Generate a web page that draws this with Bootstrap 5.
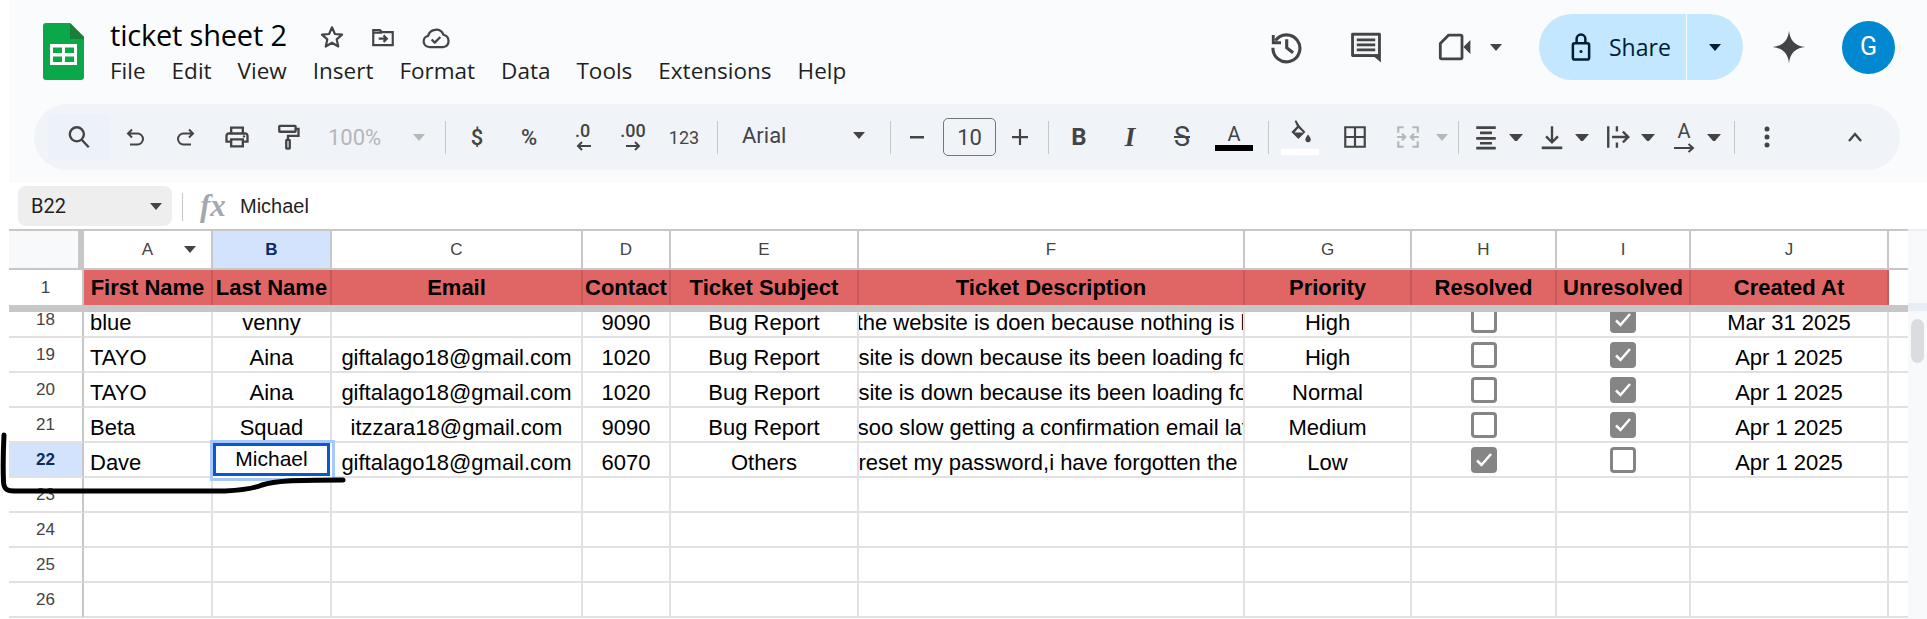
<!DOCTYPE html>
<html lang="en">
<head>
<meta charset="utf-8">
<title>ticket sheet 2</title>
<link href="https://cdn.jsdelivr.net/npm/bootstrap@5.3.0/dist/css/bootstrap.min.css" rel="stylesheet">
<style>
html,body{height:619px;overflow:hidden;background:#fff;}
body{position:relative;padding-left:9px;font-family:"Liberation Sans",Arial,sans-serif;color:#000;}
svg{display:block;flex:none;}
.app-head{height:183px;background:#f9fbfd;}
.head-top{height:104px;}
.logo-box{width:41px;margin-left:34px;margin-top:23px;}
.doc-titles{margin-left:26px;}
.doc-title{font-family:"Open Sans",sans-serif;font-size:29px;line-height:36px;margin-top:17px;color:#000;letter-spacing:-.2px;}
.doc-icons{gap:24px;margin-left:32px;margin-top:5px;}
.menu-row{gap:26px;margin-top:3px;font-family:"Open Sans",sans-serif;font-size:22.500px;line-height:30px;color:#1f1f1f;}
.right-tools{margin-left:auto;margin-right:32px;height:94px;}
.share-pill{width:204px;height:66px;border-radius:33px;background:#c2e7ff;color:#001d35;font-family:"Open Sans",sans-serif;font-size:23px;}
.share-main{width:148px;height:66px;border-right:1px solid #f9fbfd;padding-left:32px;gap:18px;}
.share-drop{width:55px;}
.avatar-g{width:53px;height:53px;border-radius:50%;background:#0288d1;color:#fff;font-family:"Roboto",sans-serif;font-size:25px;}
.tri{width:0;height:0;border-left:6px solid transparent;border-right:6px solid transparent;border-top:7px solid #444;flex:none;}
.tri-dark{border-top-color:#001d35;}
.tri-off{border-top-color:#b5b7b9;}
.r-hist{margin-right:46px;}.r-comm{margin-right:55px;}.r-vid{margin-right:18px;}.r-tri{margin-right:37px;}.r-share{margin-right:29px;}.r-gem{margin-right:36px;}
.toolbar{height:66px;margin-left:25px;margin-right:27px;border-radius:33px;background:#f0f4f9;padding-left:14px;color:#444;font-family:"Roboto",sans-serif;}
.tb-i{height:46px;flex:none;display:flex;align-items:center;justify-content:center;}
.tb-search{background:#edf2fa;border-radius:4px;}
.tw-4{width:4px}.tw-6{width:6px}.tw-7{width:7px}.tw-10{width:10px}.tw-11{width:11px}.tw-12{width:12px}.tw-13{width:13px}.tw-14{width:14px}
.tw-30{width:30px}.tw-42{width:42px}.tw-46{width:46px}.tw-48{width:48px}.tw-50{width:50px}.tw-52{width:52px}.tw-53{width:53px}.tw-54{width:54px}.tw-58{width:58px}.tw-60{width:60px}.tw-62{width:62px}.tw-64{width:64px}.tw-66{width:66px}.tw-88{width:88px}.tw-90{width:90px}.tw-161{width:161px}
.tb-sep{width:1px;height:33px;background:#c7c7c7;flex:none;}
.tb-pct{color:#b4b6b8;font-size:22px;justify-content:flex-start;padding-left:14px;}
.tb-txt{font-size:22px;}
.tb-sm{font-size:18px;}
.tb-dec{flex-direction:column;font-size:18px;line-height:18px;font-weight:500;}
.tb-font{font-size:22px;justify-content:space-between;padding:0 14px 4px 24px;}
.tb-size{height:38px;border:1px solid #747775;border-radius:5px;font-size:22px;}
.tb-b{font-weight:700;font-size:24px;}
.tb-it{font-family:"Liberation Serif",serif;font-style:italic;font-weight:700;font-size:27px;}
.tb-st{font-size:27px;}
.tb-colr{flex-direction:column;font-size:20px;line-height:22px;}
.bar-ink{width:38px;height:6px;background:#000;}
.bar-paper{width:38px;height:6px;background:#fff;margin-top:1px;}
.pair-i{width:46px;display:flex;justify-content:center;}
.formula{height:46px;padding-left:9px;}
.name-box{width:154px;height:40px;margin-top:3px;border-radius:8px;background:#eee;padding:0 10px 0 13px;font-family:"Roboto",sans-serif;font-size:20px;color:#1f1f1f;}
.fx-sep{width:1px;height:28px;background:#c7c7c7;margin-left:10px;margin-top:10px;}
.fx-mark{font-family:"Liberation Serif",serif;font-style:italic;font-weight:700;font-size:31px;color:#a4a8ac;margin-left:17px;width:40px;line-height:46px;}
.fx-val{font-size:20px;line-height:46px;color:#1f1f1f;}
.sheet-main{width:1899px;flex:none;}
.vscroll{width:19px;flex:none;background:#f8f9fa;height:390px;}
.vs-top{height:74px;border-top:2px solid #eceef1;}
.vs-mark{height:8px;background:#e8edf5;}
.vs-thumb{width:13px;height:44px;margin:8px 0 0 3px;border-radius:7px;background:#dadce0;}
.gridt{table-layout:fixed;width:1899px;border-collapse:separate;border-spacing:0;}
.c-rh{width:75px}.c-a{width:129px}.c-b{width:119px}.c-c{width:251px}.c-d{width:88px}.c-e{width:188px}.c-f{width:386px}.c-g{width:167px}.c-h{width:145px}.c-i{width:134px}.c-j{width:198px}.c-x{width:19px}
.gridt th,.gridt td{padding:0;overflow:hidden;white-space:nowrap;}
.colhd th{height:41px;border-top:2px solid #c7c7c7;border-right:2px solid #c7c7c7;border-bottom:2px solid #c7c7c7;font:400 17px "Liberation Sans",Arial,sans-serif;color:#444;text-align:center;vertical-align:middle;}
.colhd .corner{background:#f8f9fa;border-right:6px solid #c7c7c7;border-bottom:2px solid #c7c7c7;}
.colhd .colsel{background:#d3e3fd;color:#0b2a66;font-weight:700;}
.colhd .col-a-in{display:flex;align-items:center;justify-content:center;position:relative;}
.colhd .tri{position:absolute;right:15px;top:6px;}
.colhd .col-x{border-right:0;}
.frz th{height:35px;}
.frz .rn{background:#fff;border-right:2px solid #c7c7c7;font:400 17px "Liberation Sans",Arial,sans-serif;color:#444;text-align:center;}
.frz .redh{background:#e06666;border-right:2px solid #c95a5a;font:700 22px/34px "Liberation Sans",Arial,sans-serif;color:#000;text-align:center;}
.frz .nof{background:#fff;}
.frz-bar{height:7px;background:#c7c7c7;}
.bodyclip{height:307px;overflow:hidden;}
.gridb{margin-top:-9px;}
.gridb td{height:35px;border-right:2px solid #e1e1e1;border-bottom:2px solid #e1e1e1;font-size:22px;line-height:26px;text-align:center;vertical-align:bottom;color:#000;}
.gridb .rn{border-right:2px solid #c7c7c7;border-bottom-color:#e1e1e1;font-size:17px;line-height:26px;color:#444;vertical-align:middle;}
.gridb .rn-sel{background:#d3e3fd;color:#0b2a66;font-weight:700;}
.gridb .lft{text-align:left;padding-left:6px;}
.gridb .xc{border-right:0;}
.clipc{display:flex;justify-content:center;overflow:hidden;}
.clipc span{flex:none;}
.cell-sel{position:relative;box-shadow:inset 0 0 0 3px #0b57d0,0 0 0 3px #a8c7fa;}
.gridb .cell-sel{font-size:21px;vertical-align:top;line-height:31px;overflow:visible;border-color:transparent;}
.ck{width:26px;height:26px;margin:0 auto 3px;border:3px solid #858585;border-radius:4px;}
.ck-on{background:#858585;}
.ink{position:absolute;left:0;top:430px;pointer-events:none;}
</style>
</head>
<body>
<header class="app-head">
  <div class="head-top d-flex">
    <div class="logo-box">
      <svg width="41" height="57" viewBox="0 0 41 57"><path d="M3 0H27L41 14V54a3 3 0 0 1-3 3H3a3 3 0 0 1-3-3V3a3 3 0 0 1 3-3z" fill="#0ba84a"/><path d="M27 0L41 14V16H27z" fill="#188038"/><path d="M7 21H34V42H7z" fill="#fff"/><path d="M10 24.500H19V30H10zM22 24.500H31V30H22zM10 33.500H19V39H10zM22 33.500H31V39H22z" fill="#0ba84a"/></svg>
    </div>
    <div class="doc-titles">
      <div class="d-flex align-items-start">
        <div class="doc-title">ticket sheet 2</div>
        <div class="doc-icons d-flex align-items-center mt-4">
          <svg width="26" height="26" viewBox="0 0 24 24" fill="none" stroke="#444" stroke-width="2" stroke-linejoin="round"><path d="M12 3l2.700 6.200 6.600.600-5 4.400 1.500 6.600L12 17.300 6.200 20.800l1.500-6.600-5-4.400 6.600-.6z"/></svg>
          <svg width="28" height="26" viewBox="0 0 24 24" fill="none" stroke="#444" stroke-width="2"><path d="M3 5.500h6l2 2h10v12H3zM3 8h8"/><path d="M8 13.500h7M12.500 10.500l3 3-3 3"/></svg>
          <svg width="30" height="26" viewBox="0 0 24 20" fill="none" stroke="#444" stroke-width="1.800" stroke-linejoin="round"><path d="M6.500 18a4.500 4.500 0 0 1-.8-8.900A6.500 6.500 0 0 1 18 8.200 5 5 0 0 1 18 18z"/><path d="M8.500 12l2.500 2.500 4.500-4.500"/></svg>
        </div>
      </div>
      <nav class="menu-row d-flex">
        <span>File</span><span>Edit</span><span>View</span><span>Insert</span><span>Format</span><span>Data</span><span>Tools</span><span>Extensions</span><span>Help</span>
      </nav>
    </div>
    <div class="right-tools d-flex align-items-center">
      <svg class="r-hist" width="34" height="34" viewBox="0 0 24 24" fill="none" stroke="#444" stroke-width="2.200"><path d="M4.500 7.500A9.500 9.500 0 1 1 2.800 12.500"/><path d="M3 3.500v5.500h5.500" stroke-width="2"/><path d="M12.500 6.500V12.500l4.500 3.500"/></svg>
      <svg class="r-comm" width="34" height="34" viewBox="0 0 24 24"><path d="M21.500 2H2.500a1 1 0 0 0-1 1v15a1 1 0 0 0 1 1H18l4.500 4V3a1 1 0 0 0-1-1z" fill="#444"/><path d="M3.500 4h17v13H3.500z" fill="#f3f4f6"/><path d="M5.500 6h13v2h-13zM5.500 9.500h13v2h-13zM5.500 13h13v2h-13z" fill="#444"/></svg>
      <svg class="r-vid" width="34" height="28" viewBox="0 0 24 20" fill="none"><path d="M7.500 1.500H16a1 1 0 0 1 1 1v15a1 1 0 0 1-1 1H2.500a1 1 0 0 1-1-1V7.500z" stroke="#444" stroke-width="2" stroke-linejoin="round"/><path d="M18 10L23 5v10z" fill="#444"/></svg>
      <div class="tri r-tri"></div>
      <div class="share-pill d-flex align-items-center r-share">
        <div class="share-main d-flex align-items-center">
          <svg width="20" height="30" viewBox="0 0 16 24" fill="none" stroke="#001d35" stroke-width="2"><rect x="1.500" y="9" width="13" height="13" rx="1.500"/><path d="M4.500 9V5.500a3.500 3.500 0 0 1 7 0V9"/><circle cx="8" cy="15.500" r="1.200" fill="#001d35" stroke="none"/></svg>
          <span>Share</span>
        </div>
        <div class="share-drop d-flex justify-content-center"><div class="tri tri-dark"></div></div>
      </div>
      <svg class="r-gem" width="34" height="34" viewBox="0 0 24 24"><path d="M12 .5C12.700 7.500 16.500 11.300 23.500 12 16.500 12.700 12.700 16.500 12 23.500 11.300 16.500 7.500 12.700.5 12 7.500 11.300 11.300 7.500 12 .5z" fill="#444"/></svg>
      <div class="avatar-g d-flex align-items-center justify-content-center">G</div>
    </div>
  </div>
  <div class="toolbar d-flex align-items-center">
    <div class="tb-i tw-62 tb-search"><svg width="26" height="26" viewBox="0 0 24 24" fill="none" stroke="#444" stroke-width="2.200"><circle cx="10" cy="9.500" r="6.500"/><path d="M14.500 14.500L21 21.500"/></svg></div>
    <div class="tb-i tw-50"><svg width="24" height="24" viewBox="0 0 24 24" fill="none" stroke="#444" stroke-width="2"><path d="M9 4.500L5 8.500l4 4M5 8.500h9.500a5.500 5.500 0 0 1 0 11H7"/></svg></div>
    <div class="tb-i tw-52"><svg width="24" height="24" viewBox="0 0 24 24" fill="none" stroke="#444" stroke-width="2"><path d="M15 4.500l4 4-4 4M19 8.500H9.500a5.500 5.500 0 0 0 0 11H17"/></svg></div>
    <div class="tb-i tw-50"><svg width="28" height="28" viewBox="0 0 24 24" fill="#444"><path d="M19 8h-1V3H6v5H5c-1.660 0-3 1.340-3 3v6h4v4h12v-4h4v-6c0-1.660-1.340-3-3-3zM8 5h8v3H8V5zm8 12v2H8v-4h8v2zm2-2v-2H6v2H4v-4c0-.55.45-1 1-1h14c.55 0 1 .45 1 1v4h-2z"/><circle cx="18" cy="11.500" r="1"/></svg></div>
    <div class="tb-i tw-52"><svg width="28" height="28" viewBox="0 0 24 24" fill="none" stroke="#444" stroke-width="2"><rect x="4.500" y="2.500" width="14" height="5" rx=".5"/><path d="M18.500 5h2.500v6h-9v3"/><rect x="10.500" y="14.500" width="3" height="7.500" rx=".5"/></svg></div>
    <div class="tb-i tw-90 tb-pct">100%</div>
    <div class="tb-i tw-30"><div class="tri tri-off"></div></div>
    <div class="tb-i tw-11"></div><div class="tb-sep"></div><div class="tb-i tw-6"></div>
    <div class="tb-i tw-50 tb-txt fw-medium">$</div>
    <div class="tb-i tw-54 tb-txt fw-medium">%</div>
    <div class="tb-i tw-53 tb-dec"><span>.0</span><svg width="22" height="12" viewBox="0 0 22 12" fill="none" stroke="#444" stroke-width="2"><path d="M19 6H6M10 2L6 6l4 4"/></svg></div>
    <div class="tb-i tw-48 tb-dec"><span>.00</span><svg width="22" height="12" viewBox="0 0 22 12" fill="none" stroke="#444" stroke-width="2"><path d="M4 6h13M13 2l4 4-4 4"/></svg></div>
    <div class="tb-i tw-54 tb-sm">123</div>
    <div class="tb-i tw-6"></div><div class="tb-sep"></div>
    <div class="tb-i tw-161 tb-font"><span>Arial</span><div class="tri"></div></div>
    <div class="tb-i tw-11"></div><div class="tb-sep"></div>
    <div class="tb-i tw-52"><svg width="20" height="20" viewBox="0 0 20 20"><path d="M3 9h14v2.500H3z" fill="#444"/></svg></div>
    <div class="tb-i tw-53 tb-size">10</div>
    <div class="tb-i tw-48"><svg width="22" height="22" viewBox="0 0 22 22"><path d="M3 10h16v2.200H3zM9.900 3h2.200v16H9.900z" fill="#444"/></svg></div>
    <div class="tb-i tw-4"></div><div class="tb-sep"></div>
    <div class="tb-i tw-60 tb-b">B</div>
    <div class="tb-i tw-42 tb-it">I</div>
    <div class="tb-i tw-62 tb-st"><s>S</s></div>
    <div class="tb-i tw-42 tb-colr"><span>A</span><div class="bar-ink"></div></div>
    <div class="tb-i tw-13"></div><div class="tb-sep"></div>
    <div class="tb-i tw-62 tb-colr"><svg width="26" height="28" viewBox="0 0 24 26" fill="#444"><path d="M7 1l1.500-.8 3 5 5.500 6-6.500 6.500L4 11.200l5.200-5.500z"/><path d="M10.500 7.500L7 11.500h8z" fill="#f0f4f9"/><path d="M19.500 13.500c1.500 2 2.500 3.200 2.500 4.700a2.500 2.500 0 0 1-5 0c0-1.500 1-2.700 2.500-4.700z"/></svg><div class="bar-paper"></div></div>
    <div class="tb-i tw-48"><svg width="26" height="26" viewBox="0 0 24 24" fill="none" stroke="#444" stroke-width="2"><path d="M3 3h18v18H3zM12 3v18M3 12h18"/></svg></div>
    <div class="tb-i tw-58"><svg width="26" height="26" viewBox="0 0 24 24" fill="none" stroke="#b5b7b9" stroke-width="2"><path d="M3 8V3h5M16 3h5v5M3 16v5h5M16 21h5v-5M2 12h7M6.500 9l3 3-3 3M22 12h-7M17.500 9l-3 3 3 3"/></svg></div>
    <div class="tb-i tw-10"><div class="tri tri-off"></div></div>
    <div class="tb-i tw-11"></div><div class="tb-sep"></div>
    <div class="tb-i tw-4"></div>
    <div class="tb-i tw-66"><div class="pair-i"><svg width="26" height="26" viewBox="0 0 24 24"><path d="M3 2h18v2.500H3zM6.500 7h11v2.500h-11zM3 12h18v2.500H3zM6.500 16.500h11V19h-11zM3 21h18v2.500H3z" fill="#444"/></svg></div><div class="tri tw-14"></div><div class="tw-6"></div></div>
    <div class="tb-i tw-66"><div class="pair-i"><svg width="26" height="26" viewBox="0 0 24 24" fill="none" stroke="#444" stroke-width="2.200"><path d="M12 2v15M6.500 11.500L12 17l5.500-5.500"/><path d="M2.500 22h19" stroke-width="2.500"/></svg></div><div class="tri tw-14"></div><div class="tw-6"></div></div>
    <div class="tb-i tw-66"><div class="pair-i"><svg width="26" height="26" viewBox="0 0 24 24" fill="none" stroke="#444" stroke-width="2.200"><path d="M3 2v20M11 2v5M11 17v5M6.500 12h15M16.500 7l5 5-5 5"/></svg></div><div class="tri tw-14"></div><div class="tw-6"></div></div>
    <div class="tb-i tw-66"><div class="pair-i flex-column align-items-center tb-colr"><span>A</span><svg width="24" height="12" viewBox="0 0 24 12" fill="none" stroke="#444" stroke-width="2"><path d="M2 6h19M16.500 2l4.500 4-4.500 4"/></svg></div><div class="tri tw-14"></div><div class="tw-6"></div></div>
    <div class="tb-i tw-7"></div><div class="tb-sep"></div>
    <div class="tb-i tw-64"><svg width="8" height="24" viewBox="0 0 8 24" fill="#444"><circle cx="4" cy="4" r="2.500"/><circle cx="4" cy="12" r="2.500"/><circle cx="4" cy="20" r="2.500"/></svg></div>
    <div class="tb-i tw-12"></div>
    <div class="tb-i tw-88"><svg width="20" height="14" viewBox="0 0 20 14" fill="none" stroke="#444" stroke-width="2.400"><path d="M4 11l6-7 6 7"/></svg></div>
  </div>
</header>
<section class="formula d-flex">
  <div class="name-box d-flex align-items-center justify-content-between"><span>B22</span><div class="tri"></div></div>
  <div class="fx-sep"></div>
  <div class="fx-mark">fx</div>
  <div class="fx-val">Michael</div>
</section>
<div class="d-flex">
  <main class="sheet-main">
    <table class="gridt">
      <colgroup><col class="c-rh"><col class="c-a"><col class="c-b"><col class="c-c"><col class="c-d"><col class="c-e"><col class="c-f"><col class="c-g"><col class="c-h"><col class="c-i"><col class="c-j"><col class="c-x"></colgroup>
      <tr class="colhd"><th class="corner"></th><th><div class="col-a-in">A<div class="tri"></div></div></th><th class="colsel">B</th><th>C</th><th>D</th><th>E</th><th>F</th><th>G</th><th>H</th><th>I</th><th>J</th><th class="col-x"></th></tr>
      <tr class="frz"><th class="rn">1</th><th class="redh">First Name</th><th class="redh">Last Name</th><th class="redh">Email</th><th class="redh">Contact</th><th class="redh">Ticket Subject</th><th class="redh">Ticket Description</th><th class="redh">Priority</th><th class="redh">Resolved</th><th class="redh">Unresolved</th><th class="redh">Created At</th><th class="nof"></th></tr>
    </table>
    <div class="frz-bar"></div>
    <div class="bodyclip">
      <table class="gridt gridb">
        <colgroup><col class="c-rh"><col class="c-a"><col class="c-b"><col class="c-c"><col class="c-d"><col class="c-e"><col class="c-f"><col class="c-g"><col class="c-h"><col class="c-i"><col class="c-j"><col class="c-x"></colgroup>
        <tr><td class="rn">18</td><td class="lft">blue</td><td>venny</td><td></td><td>9090</td><td>Bug Report</td><td><div class="clipc"><span>the website is doen because nothing is l</span></div></td><td>High</td><td><div class="ck"></div></td><td><div class="ck ck-on"><svg width="20" height="20" viewBox="0 0 20 20" fill="none" stroke="#fff" stroke-width="2.500"><path d="M3 10.500l4.500 4.500L17 4"/></svg></div></td><td>Mar 31 2025</td><td class="xc"></td></tr>
        <tr><td class="rn">19</td><td class="lft">TAYO</td><td>Aina</td><td>giftalago18@gmail.com</td><td>1020</td><td>Bug Report</td><td><div class="clipc"><span>the website is down because its been loading for a long</span></div></td><td>High</td><td><div class="ck"></div></td><td><div class="ck ck-on"><svg width="20" height="20" viewBox="0 0 20 20" fill="none" stroke="#fff" stroke-width="2.500"><path d="M3 10.500l4.500 4.500L17 4"/></svg></div></td><td>Apr 1 2025</td><td class="xc"></td></tr>
        <tr><td class="rn">20</td><td class="lft">TAYO</td><td>Aina</td><td>giftalago18@gmail.com</td><td>1020</td><td>Bug Report</td><td><div class="clipc"><span>the website is down because its been loading for a long</span></div></td><td>Normal</td><td><div class="ck"></div></td><td><div class="ck ck-on"><svg width="20" height="20" viewBox="0 0 20 20" fill="none" stroke="#fff" stroke-width="2.500"><path d="M3 10.500l4.500 4.500L17 4"/></svg></div></td><td>Apr 1 2025</td><td class="xc"></td></tr>
        <tr><td class="rn">21</td><td class="lft">Beta</td><td>Squad</td><td>itzzara18@gmail.com</td><td>9090</td><td>Bug Report</td><td><div class="clipc"><span>Is soo slow getting a confirmation email later</span></div></td><td>Medium</td><td><div class="ck"></div></td><td><div class="ck ck-on"><svg width="20" height="20" viewBox="0 0 20 20" fill="none" stroke="#fff" stroke-width="2.500"><path d="M3 10.500l4.500 4.500L17 4"/></svg></div></td><td>Apr 1 2025</td><td class="xc"></td></tr>
        <tr><td class="rn rn-sel">22</td><td class="lft">Dave</td><td class="cell-sel">Michael</td><td>giftalago18@gmail.com</td><td>6070</td><td>Others</td><td><div class="clipc"><span>I want to reset my password,i have forgotten the first ones</span></div></td><td>Low</td><td><div class="ck ck-on"><svg width="20" height="20" viewBox="0 0 20 20" fill="none" stroke="#fff" stroke-width="2.500"><path d="M3 10.500l4.500 4.500L17 4"/></svg></div></td><td><div class="ck"></div></td><td>Apr 1 2025</td><td class="xc"></td></tr>
        <tr><td class="rn">23</td><td></td><td></td><td></td><td></td><td></td><td></td><td></td><td></td><td></td><td></td><td class="xc"></td></tr>
        <tr><td class="rn">24</td><td></td><td></td><td></td><td></td><td></td><td></td><td></td><td></td><td></td><td></td><td class="xc"></td></tr>
        <tr><td class="rn">25</td><td></td><td></td><td></td><td></td><td></td><td></td><td></td><td></td><td></td><td></td><td class="xc"></td></tr>
        <tr><td class="rn">26</td><td></td><td></td><td></td><td></td><td></td><td></td><td></td><td></td><td></td><td></td><td class="xc"></td></tr>
      </table>
    </div>
  </main>
  <aside class="vscroll"><div class="vs-top"></div><div class="vs-mark"></div><div class="vs-thumb"></div></aside>
</div>
<svg class="ink" width="360" height="70" viewBox="0 0 360 70" fill="none" stroke="#000" stroke-width="5" stroke-linecap="round" stroke-linejoin="round"><path d="M4 5C3 25 3 40 3.500 52 4 60 8 61 14 61L225 61C245 60 255 58 262 55 275 51 290 50 343 50"/></svg>
<script src="https://cdn.jsdelivr.net/npm/bootstrap@5.3.0/dist/js/bootstrap.bundle.min.js"></script>
</body>
</html>
